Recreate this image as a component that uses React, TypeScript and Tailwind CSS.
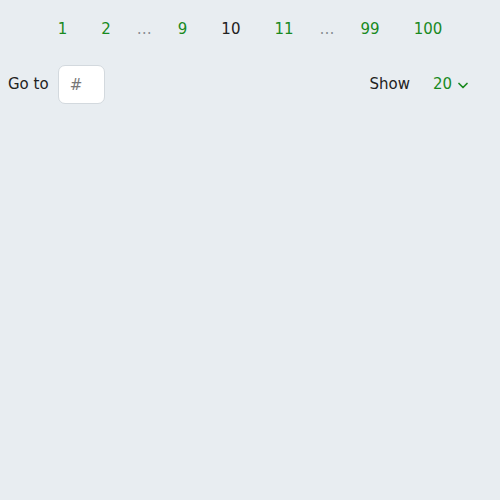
const pages: (number | null)[] = [1, 2, null, 9, 10, 11, null, 99, 100]
const CURRENT = 10

export default function App() {
  return (
    <div className="min-h-[500px] w-full bg-[#e8edf1] font-['DejaVu_Sans',sans-serif] text-[15px] text-[#222]">
      <nav className="flex items-center justify-center pt-[17px]">
        {pages.map((p, i) =>
          p === null ? (
            <span key={i} className="px-[9px] leading-6 text-[#8a8f94]">…</span>
          ) : (
            <a
              key={i}
              href="#"
              className={
                'px-[17px] leading-6 ' + (p === CURRENT ? 'text-[#222]' : 'text-[#198a1f]')
              }
            >
              {p}
            </a>
          ),
        )}
      </nav>

      <div className="mt-[24px] flex items-center justify-between pl-[8px] pr-[32px]">
        <label className="flex items-center gap-[9px]">
          <span>Go to</span>
          <input
            placeholder="#"
            className="h-[39px] w-[47px] rounded-[7px] border border-[#d3d9de] bg-white px-[11px] text-[15px] placeholder:text-[#777]"
          />
        </label>
        <div className="flex items-center gap-[23px]">
          <span>Show</span>
          <button type="button" className="flex items-center gap-[6px] text-[#198a1f]">
            20
            <svg width="10" height="7" viewBox="0 0 10 7" fill="none" className="mt-[1px]">
              <path d="M1 1.5 5 5.5 9 1.5" stroke="currentColor" strokeWidth="1.7" strokeLinecap="round" strokeLinejoin="round" />
            </svg>
          </button>
        </div>
      </div>
    </div>
  )
}
